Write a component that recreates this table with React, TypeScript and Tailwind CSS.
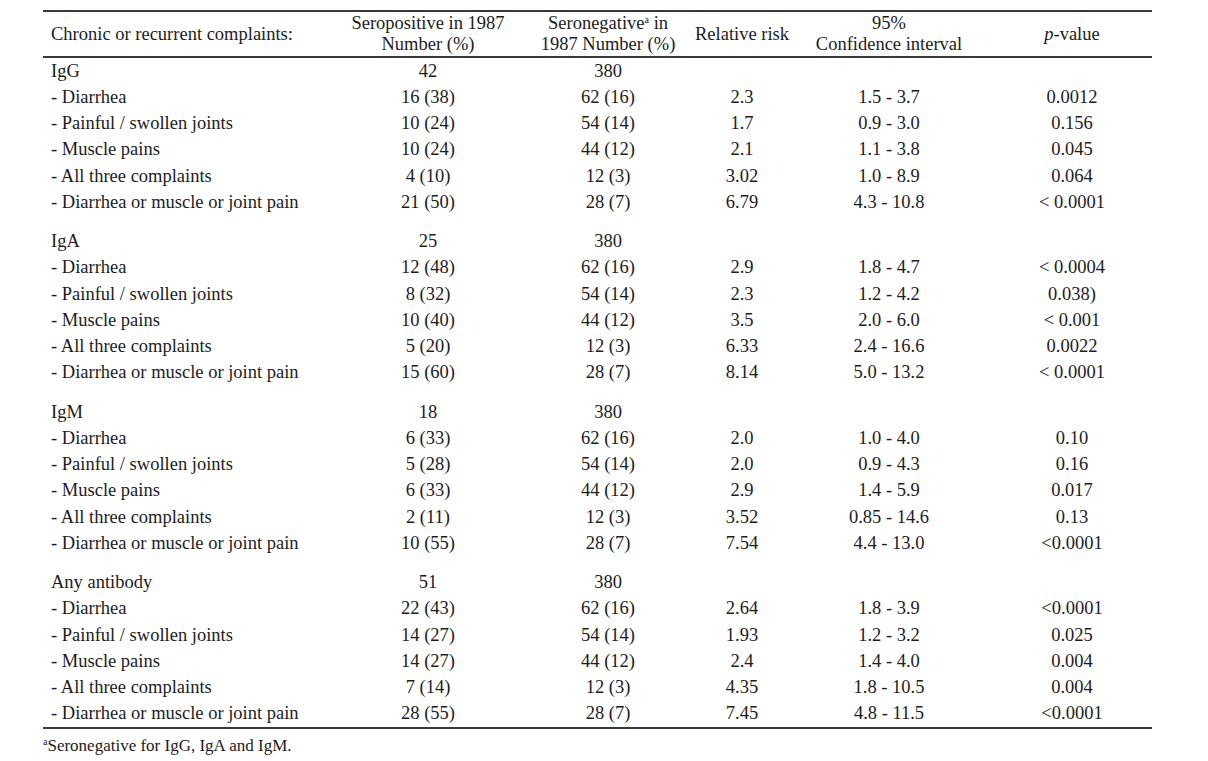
type Row = [string, string, string, string, string, string]

type Group = {
  name: string
  pos: string
  neg: string
  rows: Row[]
}

const groups: Group[] = [
  {
    name: "IgG",
    pos: "42",
    neg: "380",
    rows: [
      ["- Diarrhea", "16 (38)", "62 (16)", "2.3", "1.5 - 3.7", "0.0012"],
      ["- Painful / swollen joints", "10 (24)", "54 (14)", "1.7", "0.9 - 3.0", "0.156"],
      ["- Muscle pains", "10 (24)", "44 (12)", "2.1", "1.1 - 3.8", "0.045"],
      ["- All three complaints", "4 (10)", "12 (3)", "3.02", "1.0 - 8.9", "0.064"],
      ["- Diarrhea or muscle or joint pain", "21 (50)", "28 (7)", "6.79", "4.3 - 10.8", "< 0.0001"],
    ],
  },
  {
    name: "IgA",
    pos: "25",
    neg: "380",
    rows: [
      ["- Diarrhea", "12 (48)", "62 (16)", "2.9", "1.8 - 4.7", "< 0.0004"],
      ["- Painful / swollen joints", "8 (32)", "54 (14)", "2.3", "1.2 - 4.2", "0.038)"],
      ["- Muscle pains", "10 (40)", "44 (12)", "3.5", "2.0 - 6.0", "< 0.001"],
      ["- All three complaints", "5 (20)", "12 (3)", "6.33", "2.4 - 16.6", "0.0022"],
      ["- Diarrhea or muscle or joint pain", "15 (60)", "28 (7)", "8.14", "5.0 - 13.2", "< 0.0001"],
    ],
  },
  {
    name: "IgM",
    pos: "18",
    neg: "380",
    rows: [
      ["- Diarrhea", "6 (33)", "62 (16)", "2.0", "1.0 - 4.0", "0.10"],
      ["- Painful / swollen joints", "5 (28)", "54 (14)", "2.0", "0.9 - 4.3", "0.16"],
      ["- Muscle pains", "6 (33)", "44 (12)", "2.9", "1.4 - 5.9", "0.017"],
      ["- All three complaints", "2 (11)", "12 (3)", "3.52", "0.85 - 14.6", "0.13"],
      ["- Diarrhea or muscle or joint pain", "10 (55)", "28 (7)", "7.54", "4.4 - 13.0", "<0.0001"],
    ],
  },
  {
    name: "Any antibody",
    pos: "51",
    neg: "380",
    rows: [
      ["- Diarrhea", "22 (43)", "62 (16)", "2.64", "1.8 - 3.9", "<0.0001"],
      ["- Painful / swollen joints", "14 (27)", "54 (14)", "1.93", "1.2 - 3.2", "0.025"],
      ["- Muscle pains", "14 (27)", "44 (12)", "2.4", "1.4 - 4.0", "0.004"],
      ["- All three complaints", "7 (14)", "12 (3)", "4.35", "1.8 - 10.5", "0.004"],
      ["- Diarrhea or muscle or joint pain", "28 (55)", "28 (7)", "7.45", "4.8 - 11.5", "<0.0001"],
    ],
  },
]

// column widths, centred cells
const cols = ["w-[180px]", "w-[180px]", "w-[88px]", "w-[206px]", "w-[160px]"]

function Cell({ w, children }: { w: string; children?: React.ReactNode }) {
  return <div className={`${w} shrink-0 flex justify-center whitespace-nowrap`}>{children}</div>
}

function DataRow({ cells }: { cells: string[] }) {
  return (
    <div className="flex items-center h-[26.25px]">
      <div className="w-[295px] shrink-0 pl-[8px] whitespace-nowrap">{cells[0]}</div>
      {cells.slice(1).map((c, i) => (
        <Cell key={i} w={cols[i]}>
          {c}
        </Cell>
      ))}
    </div>
  )
}

export default function App() {
  return (
    <div
      className="min-h-screen bg-white text-[#1c1c1c] pt-[10px] pl-[43px]"
      style={{ fontFamily: '"Liberation Serif", "Times New Roman", serif' }}
    >
      <div className="w-[1109px] text-[18.5px] leading-[21px]">
        {/* header */}
        <div className="flex items-center h-[48px] border-t-2 border-b-2 border-[#3a3a3a]">
          <div className="w-[295px] shrink-0 pl-[8px] whitespace-nowrap">Chronic or recurrent complaints:</div>
          <Cell w={cols[0]}>
            <div className="text-center">
              Seropositive in 1987
              <br />
              Number (%)
            </div>
          </Cell>
          <Cell w={cols[1]}>
            <div className="text-center">
              Seronegative<sup className="text-[10px] -top-[6px]">a</sup> in
              <br />
              1987 Number (%)
            </div>
          </Cell>
          <Cell w={cols[2]}>Relative risk</Cell>
          <Cell w={cols[3]}>
            <div className="text-center">
              95%
              <br />
              Confidence interval
            </div>
          </Cell>
          <Cell w={cols[4]}>
            <span>
              <i>p</i>-value
            </span>
          </Cell>
        </div>

        {/* body */}
        <div className="flex flex-col gap-[13px] border-b-2 border-[#3a3a3a]">
          {groups.map((g) => (
            <div key={g.name}>
              <DataRow cells={[g.name, g.pos, g.neg, "", "", ""]} />
              {g.rows.map((r) => (
                <DataRow key={r[0]} cells={r} />
              ))}
            </div>
          ))}
        </div>

        <div className="mt-[6px] text-[17px] leading-[22px]">
          <sup className="text-[10px] -top-[6px]">a</sup>Seronegative for IgG, IgA and IgM.
        </div>
      </div>
    </div>
  )
}
